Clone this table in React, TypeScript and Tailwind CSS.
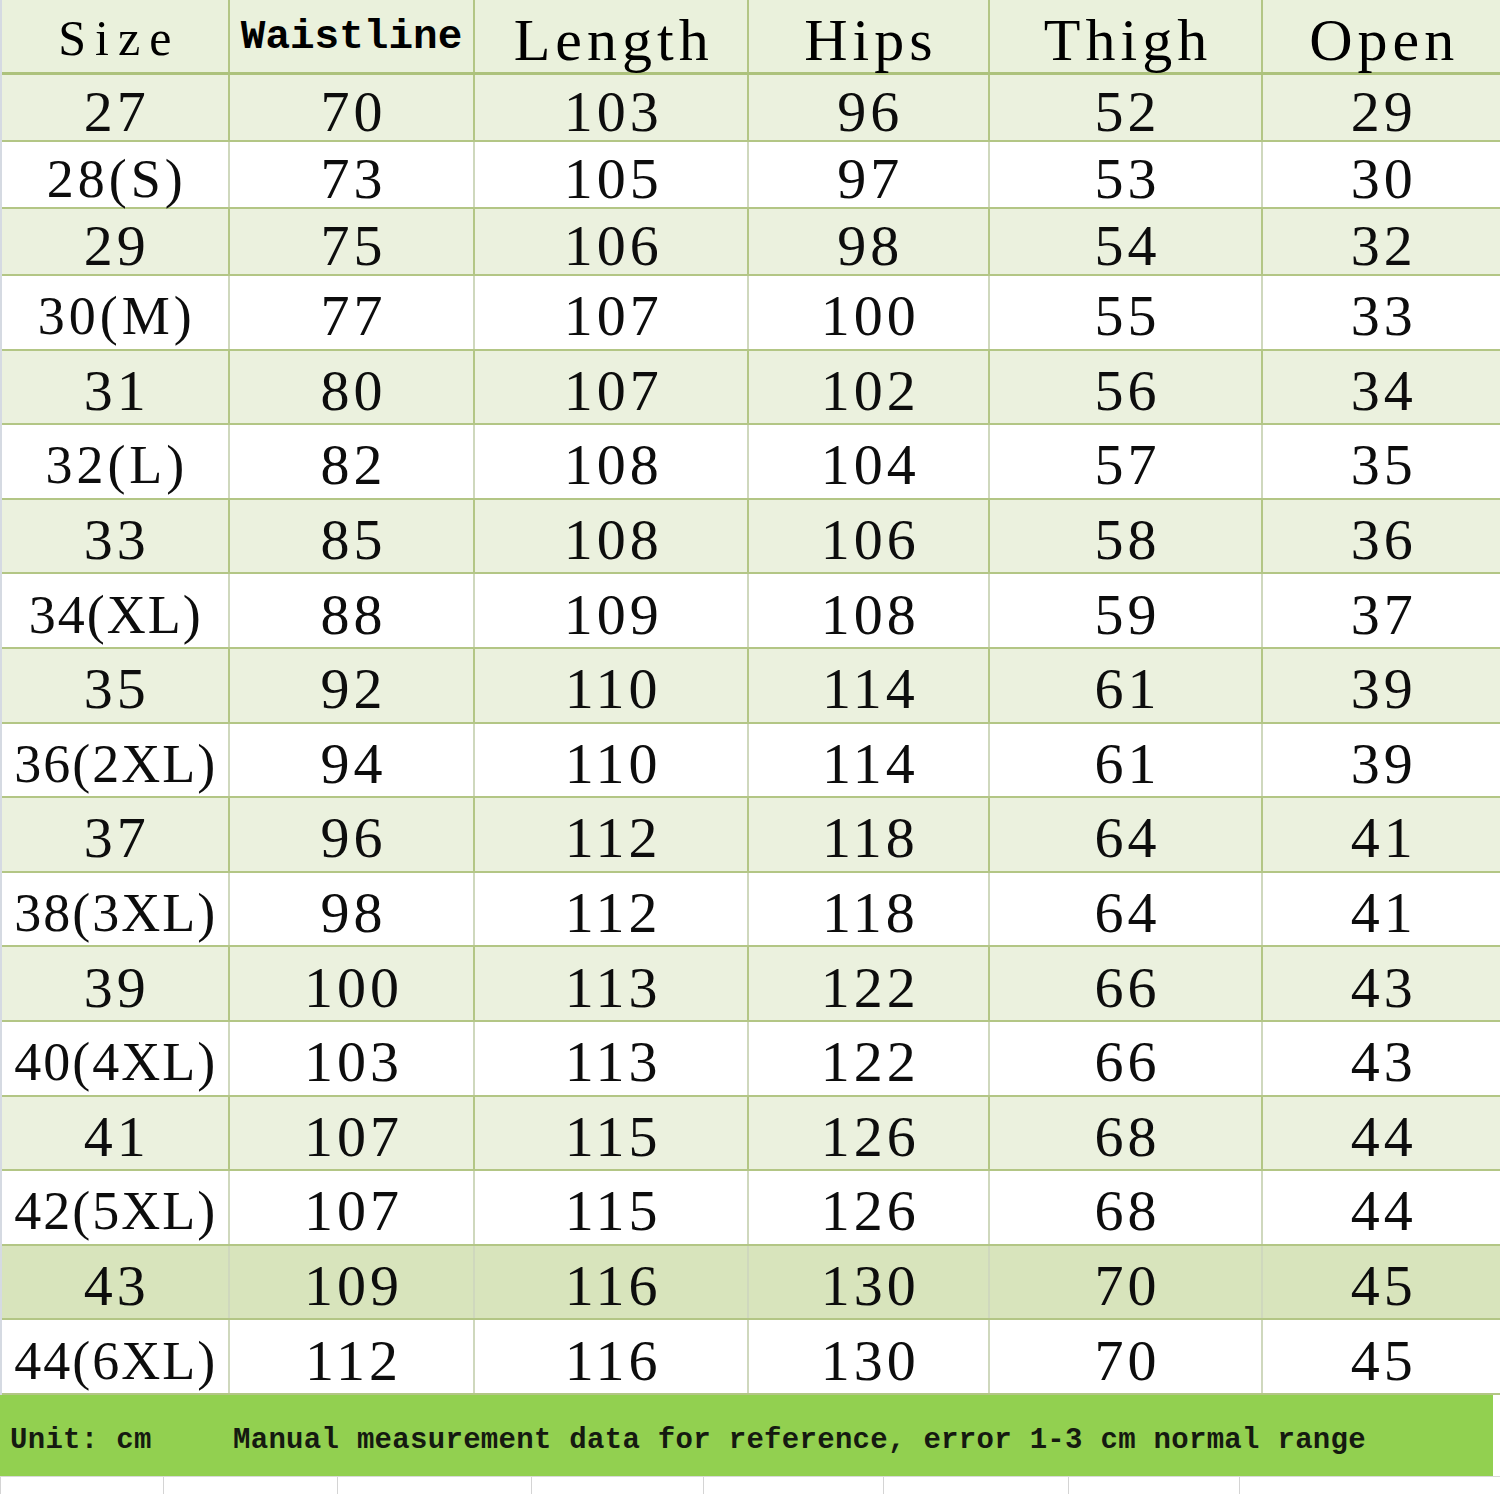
import React from 'react';

const rows: string[][] = [
  ['27', '70', '103', '96', '52', '29'],
  ['28(S)', '73', '105', '97', '53', '30'],
  ['29', '75', '106', '98', '54', '32'],
  ['30(M)', '77', '107', '100', '55', '33'],
  ['31', '80', '107', '102', '56', '34'],
  ['32(L)', '82', '108', '104', '57', '35'],
  ['33', '85', '108', '106', '58', '36'],
  ['34(XL)', '88', '109', '108', '59', '37'],
  ['35', '92', '110', '114', '61', '39'],
  ['36(2XL)', '94', '110', '114', '61', '39'],
  ['37', '96', '112', '118', '64', '41'],
  ['38(3XL)', '98', '112', '118', '64', '41'],
  ['39', '100', '113', '122', '66', '43'],
  ['40(4XL)', '103', '113', '122', '66', '43'],
  ['41', '107', '115', '126', '68', '44'],
  ['42(5XL)', '107', '115', '126', '68', '44'],
  ['43', '109', '116', '130', '70', '45'],
  ['44(6XL)', '112', '116', '130', '70', '45'],
];

const colWidths = ['w-[228px]', 'w-[246px]', 'w-[274px]', 'w-[241px]', 'w-[274px]', 'w-[237px]'];

const serif = { fontFamily: '"Liberation Serif", "Times New Roman", serif' };
const mono = { fontFamily: '"Liberation Mono", "Courier New", monospace' };

const Header = () => (
  <div className="flex h-[75px] bg-[#eaf1dc] border-b-[3px] border-[#adc27c]" style={serif}>
    <div className={`${colWidths[0]} flex items-center justify-center border-r-2 border-[#b3c685] text-[50px] tracking-[9px] pl-[9px] pt-1`}>
      Size
    </div>
    <div
      className={`${colWidths[1]} flex items-center justify-center border-r-2 border-[#b3c685] text-[41px] font-bold pt-1`}
      style={mono}
    >
      Waistline
    </div>
    {['Length', 'Hips', 'Thigh', 'Open'].map((h, i) => (
      <div
        key={h}
        className={`${colWidths[i + 2]} flex items-center justify-center ${i < 3 ? 'border-r-2 border-[#b3c685]' : ''} text-[60px] tracking-[5px] pl-[5px] pt-2`}
      >
        {h}
      </div>
    ))}
  </div>
);

const DataRow = ({ cells, index }: { cells: string[]; index: number }) => {
  const bg = index === 16 ? 'bg-[#d8e4bc]' : index % 2 === 0 ? 'bg-[#ebf1de]' : 'bg-white';
  const height = index < 3 ? 'h-[67px]' : 'h-[74.6px]';
  const line = index % 2 === 0 && index !== 16 ? 'border-[#b3c685]' : 'border-[#cfd8bd]';
  return (
    <div className={`flex ${height} ${bg} border-b-2 border-[#b3c685]`} style={serif}>
      {cells.map((c, i) => {
        const paren = i === 0 && c.includes('(');
        const short = paren && c.length <= 5;
        return (
          <div
            key={i}
            className={`${colWidths[i]} flex items-center justify-center ${i < 5 ? `border-r-2 ${line}` : ''} ${
              short
                ? 'text-[54px] tracking-[4px] pl-[4px]'
                : paren
                  ? 'text-[54px] tracking-[2px] pl-[2px]'
                  : 'text-[58px] tracking-[4px] pl-[4px]'
            } leading-none pt-2 text-[#0d0d0d]`}
          >
            {c}
          </div>
        );
      })}
    </div>
  );
};

export default function App() {
  return (
    <div className="w-[1500px] h-[1494px] bg-white overflow-hidden">
      <div className="border-l-2 border-[#d5dae2]">
        <Header />
        {rows.map((r, i) => (
          <DataRow key={i} cells={r} index={i} />
        ))}
      </div>
      <div
        className="w-[1493px] h-[81px] bg-[#92d050] flex items-center pt-[10px] text-[29px] font-bold tracking-[0.3px] text-[#151a10] whitespace-pre"
        style={mono}
      >
        <span className="ml-[10px] w-[223px]">Unit: cm</span>
        <span>Manual measurement data for reference, error 1-3 cm normal range</span>
      </div>
      <div className="flex h-[18px] border-t border-[#d9d9d9]">
        {['w-[163px]', 'w-[174px]', 'w-[194px]', 'w-[172px]', 'w-[180px]', 'w-[185px]', 'w-[171px]', 'w-[254px]'].map((w, i) => (
          <div key={i} className={`${w} border-l border-[#d4d4d4]`} />
        ))}
      </div>
    </div>
  );
}
